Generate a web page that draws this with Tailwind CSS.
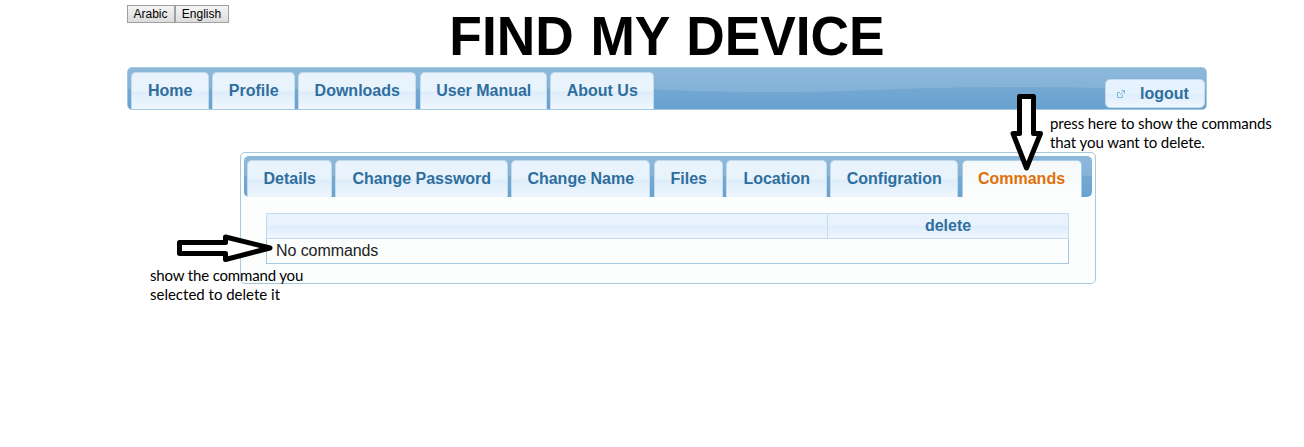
<!DOCTYPE html>
<html lang="en">
<head>
<meta charset="utf-8">
<title>Find My Device</title>
<script src="https://cdn.jsdelivr.net/npm/@tailwindcss/browser@4"></script>
<style>
.bar{background:linear-gradient(#8cb8db,#84b2d7 50%,#74a8d2 50%,#6aa3d0)}
.tab{background:linear-gradient(#e8f3fd,#e9f3fc 50%,#deedfb 52%,#eff6fe);border:1px solid #c5dbec;border-bottom:0;border-radius:5px 5px 0 0;display:flex;justify-content:center;white-space:nowrap;padding-left:.5px}
</style>
</head>
<body class="bg-white w-[1304px] h-[447px] overflow-hidden relative font-['Liberation_Sans',Arial,sans-serif] text-black">
<div class="w-[1080px] ml-[127px]">
  <header class="h-[67px] flex items-start relative">
    <div class="flex mt-[5px] text-[12px] leading-[16px]">
      <button class="w-[48px] h-[18px] border border-[#a0a0a0] bg-linear-to-b from-[#f4f4f4] to-[#dcdcdc] pr-px">Arabic</button>
      <button class="w-[54px] h-[18px] border border-[#a0a0a0] bg-linear-to-b from-[#f4f4f4] to-[#dcdcdc] pr-px">English</button>
    </div>
    <h1 class="absolute inset-x-0 top-[4px] text-center font-bold text-[56px] leading-[64px] whitespace-nowrap scale-x-[0.952] [word-spacing:2px]">FIND MY DEVICE</h1>
  </header>
  <nav class="relative bar h-[43px] rounded-[5px] border border-[#a6c9e2] overflow-hidden flex items-start pl-[3px] pt-[4px] text-[16px] leading-[36px] font-bold text-[#2e6e9e]">
    <svg class="absolute left-0 top-0" width="1078" height="41" viewBox="0 0 1078 41">
      <defs><linearGradient id="g" x1="0" y1="0" x2="0" y2="1"><stop offset="0" stop-color="#74a8d2"/><stop offset="1" stop-color="#68a2d0"/></linearGradient>
      <linearGradient id="h" x1="0" y1="0" x2="0" y2="1"><stop offset="0" stop-color="#8cb8db"/><stop offset="1" stop-color="#82b1d7"/></linearGradient></defs>
      <rect width="1078" height="26" fill="url(#h)"/>
      <path d="M0 21H520C590 25 680 25 760 21.500C840 18 940 18 1078 23V41H0Z" fill="url(#g)"/>
    </svg>
    <a class="tab relative h-[37px] w-[78px] mr-[3px]">Home</a>
    <a class="tab relative h-[37px] w-[83px] mr-[3px]">Profile</a>
    <a class="tab relative h-[37px] w-[118px] mr-[4px]">Downloads</a>
    <a class="tab relative h-[37px] w-[127px] mr-[3px]">User Manual</a>
    <a class="tab relative h-[37px] w-[104px]">About Us</a>
    <a class="relative ml-auto mr-[1px] mt-[7px] h-[29px] w-[100px] rounded-[5px] border border-[#c5dbec] bg-linear-to-b from-[#e6f2fd] from-50% via-[#deedfb] via-52% to-[#eff6fe] leading-[27px] flex items-center">
      <svg class="ml-[11px] mr-[15px]" width="8" height="8" viewBox="0 0 8 8" fill="none" stroke="#79b7de"><path d="M3 2.500H.5V7.500H5.500V5M3 5L7 1M4.500 .5H7.500V3.500"/></svg>logout</a>
  </nav>
</div>
<main class="ml-[240px] mt-[42px] w-[856px] h-[132px] border border-[#a6c9e2] rounded-[5px] bg-[#fcfefe] p-[3px]">
  <nav class="bar h-[41px] rounded-[5px] flex items-end pl-[3px] text-[16px] leading-[35px] font-bold text-[#2e6e9e]">
    <a class="tab h-[37px] w-[85px] mr-[3px]">Details</a>
    <a class="tab h-[37px] w-[173px] mr-[3px]">Change Password</a>
    <a class="tab h-[37px] w-[139px] mr-[4px]">Change Name</a>
    <a class="tab h-[37px] w-[69px] mr-[3px]">Files</a>
    <a class="tab h-[37px] w-[101px] mr-[3px]">Location</a>
    <a class="tab h-[37px] w-[128px] mr-[4px]">Configration</a>
    <a class="h-[37px] w-[120px] rounded-t-[5px] border border-b-0 border-[#a9cfe9] bg-linear-to-b from-[#f5f8f9] to-[#fcfefe] text-center pr-px text-[#e17009]">Commands</a>
  </nav>
  <section class="ml-[22px] mt-[16px] w-[803px] text-[16px]">
    <div class="h-[26px] flex border border-[#c5dbec] bg-linear-to-b from-[#e8f3fd] from-50% via-[#deedfb] via-52% to-[#eff6fe]">
      <div class="w-[560px]"></div>
      <div class="flex-1 border-l border-[#c5dbec] text-center font-bold text-[#2e6e9e] leading-[24px]">delete</div>
    </div>
    <div class="h-[25px] border border-t-0 border-[#a6c9e2] pl-[9px] leading-[24px] text-[#222] tracking-[-0.08px]">No commands</div>
  </section>
</main>
<svg class="absolute left-0 top-0 pointer-events-none" width="1304" height="447" viewBox="0 0 1304 447" fill="#fff" stroke="#000" stroke-width="5" stroke-linejoin="round">
  <path d="M1019.500 96.500H1033.500V133.500H1040.500L1026.500 168L1013 133.500H1019.500Z"/>
  <path d="M179.500 242.500H225.500V237L270 248L225.500 259.500V253.500H179.500Z"/>
</svg>
<p class="absolute left-[1050px] top-[114px] font-[Lato,sans-serif] text-[15px] leading-[19px] tracking-[-0.08px] whitespace-nowrap">press here to show the commands<br>that you want to delete.</p>
<p class="absolute left-[150px] top-[266px] font-[Lato,sans-serif] text-[15px] leading-[19px] tracking-[-0.16px] whitespace-nowrap">show the command you<br><span class="tracking-normal">selected to delete it</span></p>
</body>
</html>
